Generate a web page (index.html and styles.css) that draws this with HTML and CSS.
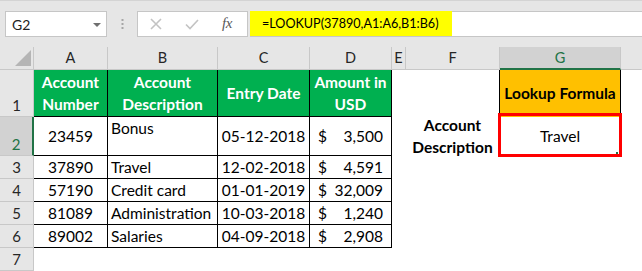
FILE: index.html
```html
<!DOCTYPE html>
<html>
<head>
<meta charset="utf-8">
<link rel="stylesheet" href="styles.css">
</head>
<body>
<div class="app">
  <div class="toolbar">
    <div class="namebox">
      <span>G2</span>
      <svg class="caret" width="8" height="4" viewBox="0 0 8 4"><path d="M0 0H8L4 4Z"/></svg>
    </div>
    <svg class="grip" width="3" height="10" viewBox="0 0 3 10"><rect x="0.5" y="0" width="2" height="2"/><rect x="0.5" y="4" width="2" height="2"/><rect x="0.5" y="8" width="2" height="2"/></svg>
    <div class="fxbox">
      <svg class="cancel" width="12" height="12" viewBox="0 0 12 12"><path d="M1 1L11 11M11 1L1 11"/></svg>
      <svg class="enter" width="14" height="11" viewBox="0 0 14 11"><path d="M1 5.5L5 9.5L13 1"/></svg>
      <span class="fx">fx</span>
    </div>
    <div class="formula"><span class="hl">=LOOKUP(37890,A1:A6,B1:B6)</span></div>
  </div>

  <div class="sheet">
    <!-- column headers -->
    <div class="corner"><svg width="16" height="16" viewBox="0 0 16 16"><path d="M16 0V16H0Z"/></svg></div>
    <div class="ch">A</div>
    <div class="ch">B</div>
    <div class="ch">C</div>
    <div class="ch">D</div>
    <div class="ch">E</div>
    <div class="ch">F</div>
    <div class="ch on">G</div>
    <div class="ch end"></div>

    <!-- row 1 -->
    <div class="rh">1</div>
    <div class="t g">Account<br>Number</div>
    <div class="t g">Account<br>Description</div>
    <div class="t g">Entry Date</div>
    <div class="t g">Amount in<br>USD</div>
    <div></div>
    <div class="rb"></div>
    <div class="rb gold">Lookup Formula</div>
    <div></div>

    <!-- row 2 -->
    <div class="rh on">2</div>
    <div class="t mid ctr">23459</div>
    <div class="t top pl">Bonus</div>
    <div class="t mid ctr">05-12-2018</div>
    <div class="t mid amt"><span>$</span><span>3,500</span></div>
    <div></div>
    <div class="label">Account<br>Description</div>
    <div class="sel">Travel<span class="handle"></span></div>
    <div></div>

    <!-- row 3 -->
    <div class="rh">3</div>
    <div class="t ctr">37890</div>
    <div class="t pl">Travel</div>
    <div class="t ctr">12-02-2018</div>
    <div class="t amt"><span>$</span><span>4,591</span></div>
    <div></div><div></div><div></div><div></div>

    <!-- row 4 -->
    <div class="rh">4</div>
    <div class="t ctr">57190</div>
    <div class="t pl">Credit card</div>
    <div class="t ctr">01-01-2019</div>
    <div class="t amt"><span>$</span><span>32,009</span></div>
    <div></div><div></div><div></div><div></div>

    <!-- row 5 -->
    <div class="rh">5</div>
    <div class="t ctr">81089</div>
    <div class="t pl">Administration</div>
    <div class="t ctr">10-03-2018</div>
    <div class="t amt"><span>$</span><span>1,240</span></div>
    <div></div><div></div><div></div><div></div>

    <!-- row 6 -->
    <div class="rh">6</div>
    <div class="t ctr">89002</div>
    <div class="t pl">Salaries</div>
    <div class="t ctr">04-09-2018</div>
    <div class="t amt"><span>$</span><span>2,908</span></div>
    <div></div><div></div><div></div><div></div>

    <!-- row 7 -->
    <div class="rh">7</div>
    <div></div><div></div><div></div><div></div><div></div><div></div><div></div><div></div>
  </div>
</div>
</body>
</html>
```

FILE: styles.css
```css
html, body {
  margin: 0;
  padding: 0;
  background: #ffffff;
}

body {
  font-family: Lato, "Liberation Sans", sans-serif;
}

.app {
  width: 642px;
  height: 271px;
  overflow: hidden;
}

/* ---------- formula bar ---------- */
.toolbar {
  height: 47px;
  box-sizing: border-box;
  border-top: 1px solid #d4d4d4;
  background: #e6e6e6;
  display: flex;
  align-items: flex-start;
  padding-top: 10px;
}

.namebox {
  margin-left: 5px;
  width: 102px;
  height: 26px;
  box-sizing: border-box;
  border: 1px solid #c6c6c6;
  background: #ffffff;
  display: flex;
  align-items: center;
  justify-content: space-between;
  padding: 0 5px 0 6px;
  font-size: 14px;
  color: #222222;
}

.caret {
  fill: #6f6f6f;
  margin-top: 1px;
}

.grip {
  margin-left: 14px;
  margin-top: 8px;
  fill: #a6a6a6;
}

.fxbox {
  margin-left: 13px;
  width: 111px;
  height: 26px;
  box-sizing: border-box;
  border: 1px solid #c6c6c6;
  background: #ffffff;
  display: flex;
  align-items: center;
  padding-left: 12px;
}

.cancel path,
.enter path {
  fill: none;
  stroke: #c3c3c3;
  stroke-width: 1.6;
}

.enter {
  margin-left: 23px;
}

.fx {
  margin-left: 23px;
  font-family: "Liberation Serif", serif;
  font-style: italic;
  font-size: 15px;
  color: #595959;
  letter-spacing: -0.5px;
  margin-top: -2px;
}

.formula {
  margin-left: 2px;
  flex: 1;
  height: 26px;
  box-sizing: border-box;
  border-top: 1px solid #c6c6c6;
  border-bottom: 1px solid #c6c6c6;
  background: #ffffff;
  display: flex;
}

.hl {
  margin-top: -1px;
  background: #ffff00;
  padding: 0 13px 0 12px;
  display: flex;
  align-items: center;
  font-size: 12.6px;
  color: #000000;
}

/* ---------- sheet ---------- */
.sheet {
  display: grid;
  grid-template-columns: 34px 74px 110px 92px 82px 14px 94px 121px 1fr;
  grid-template-rows: 23px 47px 39px repeat(5, 23px);
  font-size: 15.5px;
  color: #000000;
}

.sheet > div {
  box-sizing: border-box;
  border-right: 1px solid transparent;
  border-bottom: 1px solid transparent;
  display: flex;
  align-items: flex-end;
  line-height: 22px;
  white-space: nowrap;
  min-width: 0;
}

.corner {
  background: #e6e6e6;
  border-right-color: #c8c8c8 !important;
  border-bottom-color: #c8c8c8 !important;
  align-items: flex-start !important;
  padding: 3px 0 0 15px;
}

.corner svg {
  fill: #b5b5b5;
}

.ch {
  background: #e6e6e6;
  border-right-color: #c8c8c8 !important;
  border-bottom-color: #c8c8c8 !important;
  justify-content: center;
  align-items: center !important;
  font-size: 14.5px;
  color: #262626;
}

.ch.on {
  background: #d2d2d2;
  border-bottom: 2px solid #217346 !important;
  color: #217346;
}

.ch.end {
  border-right-color: transparent !important;
}

.rh {
  background: #e6e6e6;
  border-right-color: #c8c8c8 !important;
  border-bottom-color: #c8c8c8 !important;
  justify-content: center;
  font-size: 15px;
  color: #262626;
}

.rh.on {
  background: #d2d2d2;
  border-right: 2px solid #217346 !important;
  color: #217346;
}

.t {
  border-right-color: #000000 !important;
  border-bottom-color: #000000 !important;
}

.rb {
  border-right-color: #000000 !important;
}

.g {
  background: #00b050;
  color: #ffffff;
  font-weight: 700;
  justify-content: center;
  align-items: center !important;
  text-align: center;
}

.gold {
  background: #ffc000;
  font-weight: 700;
  justify-content: center;
  align-items: center !important;
}

.mid {
  align-items: center !important;
}

.ctr {
  justify-content: center;
}

.top {
  align-items: flex-start !important;
}

.pl {
  padding-left: 3px;
}

.amt {
  justify-content: space-between;
  padding: 0 8px 0 8px;
}

.label {
  font-weight: 700;
  justify-content: center;
  align-items: center !important;
  text-align: center;
  overflow: visible;
}

.sel {
  position: relative;
  justify-content: center;
  align-items: center !important;
}

.sel::after {
  content: "";
  position: absolute;
  left: -2px;
  top: -4px;
  right: -2px;
  bottom: -2px;
  border: 3px solid #ff0000;
  z-index: 2;
}

.handle {
  position: absolute;
  right: 2px;
  bottom: 1px;
  width: 2px;
  height: 2px;
  background: #217346;
  z-index: 3;
}
```
